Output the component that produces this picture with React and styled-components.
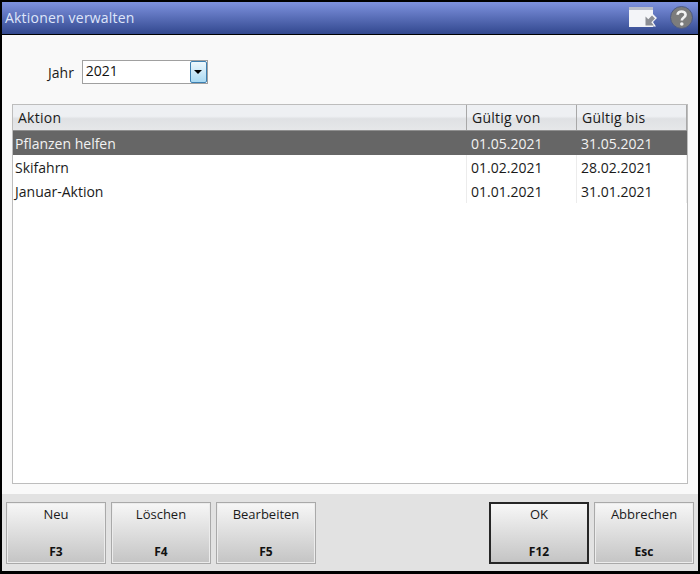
import styled, { createGlobalStyle } from "styled-components";

const GlobalStyle = createGlobalStyle`
html, body {
    margin: 0;
    padding: 0;
    background: #000;
}
body {
    font-family: "Open Sans", "Noto Sans", sans-serif;
}
`;

const Dialog = styled.div`
width: 700px;
height: 574px;
box-sizing: border-box;
border: 2px solid #000;
border-bottom-width: 3px;
display: flex;
flex-direction: column;
background: #f9f9f9;
overflow: hidden;
`;

const TitleBar = styled.header`
height: 33px;
flex: none;
box-sizing: border-box;
border-bottom: 1px solid #000;
padding: 0 5px 2px 3px;
display: flex;
align-items: center;
justify-content: space-between;
background: linear-gradient(#7e92df, #32488f);
`;

const Title = styled.h1`
margin: 0;
font-size: 14px;
font-weight: 400;
letter-spacing: 0.2px;
color: #dfe6fa;
`;

const TitleIcons = styled.div`
display: flex;
align-items: center;
gap: 13px;
`;

const Content = styled.main`
flex: 1;
min-height: 0;
display: flex;
flex-direction: column;
padding: 25px 10px 10px;
`;

const YearRow = styled.div`
display: flex;
align-items: center;
gap: 8px;
padding-left: 36px;
margin-bottom: 20px;
`;

const Label = styled.label`
font-size: 14px;
color: #1a1a1a;
`;

const Combo = styled.div`
width: 126px;
height: 24px;
box-sizing: border-box;
border: 1px solid #a0a0a0;
background: #fff;
display: flex;
align-items: center;
justify-content: space-between;
padding-left: 3px;
font-size: 14px;
line-height: 18px;
color: #111;
`;

const ComboValue = styled.span`
margin-bottom: 2px;
`;

const ComboButton = styled.span`
width: 17px;
height: 22px;
box-sizing: border-box;
border: 1px solid #3c7fb1;
border-radius: 2px;
background: linear-gradient(#eef8fd, #a9d9f3);
display: flex;
align-items: center;
justify-content: center;

&::after {
    content: "";
    border-left: 4px solid transparent;
    border-right: 4px solid transparent;
    border-top: 4px solid #000;
}
`;

const Table = styled.div`
flex: 1;
min-height: 0;
box-sizing: border-box;
border: 1px solid #bdbdbd;
background: #fff;
`;

const Columns = styled.div`
display: grid;
grid-template-columns: 454px 110px 110px;
height: ${(p) => p.$height}px;
box-sizing: border-box;
`;

const HeaderRow = styled(Columns)`
border-bottom: 1px solid #8f8f8f;
background: linear-gradient(#eef0f3 0, #eef0f3 45%, #dfe1e4 55%, #e6e7e9 100%);
`;

const HeaderCell = styled.div`
display: flex;
align-items: center;
padding-left: 5px;
font-size: 14px;
letter-spacing: 0.25px;
color: #1a1a1a;
border-right: 1px solid #a8a8a8;
`;

const Row = styled(Columns)`
background: ${(p) => (p.$selected ? "#666" : "#fff")};
color: ${(p) => (p.$selected ? "#f2f2f2" : "#1a1a1a")};
`;

const Cell = styled.div`
display: flex;
align-items: center;
padding-left: ${(p) => (p.$first ? 2 : 4)}px;
font-size: 14px;
border-right: 1px solid ${(p) => (p.$selected ? "#666" : "#ececec")};
`;

const Footer = styled.footer`
height: 77px;
flex: none;
box-sizing: border-box;
padding: 8px 4px 7px;
display: flex;
justify-content: space-between;
background: #e2e2e2;
`;

const ButtonGroup = styled.div`
display: flex;
gap: 5px;
`;

const Button = styled.button`
width: 100px;
height: 62px;
box-sizing: border-box;
padding: ${(p) => (p.$primary ? "1px 0 1px" : "2px 0 2px")};
display: flex;
flex-direction: column;
align-items: center;
justify-content: space-between;
border: ${(p) => (p.$primary ? "2px solid #262626" : "1px solid #a9a9a9")};
background: linear-gradient(#f7f7f7, #c4c4c4);
box-shadow: ${(p) => (p.$primary ? "none" : "inset 0 0 0 1px #ececec")};
font-family: inherit;
color: #1a1a1a;
`;

const ButtonLabel = styled.span`
font-size: 13px;
line-height: 18px;
`;

const ButtonKey = styled.span`
font-size: 12px;
font-weight: 700;
line-height: 18px;
color: #111;
`;

const rows = [
    { name: "Pflanzen helfen", from: "01.05.2021", to: "31.05.2021", selected: true },
    { name: "Skifahrn", from: "01.02.2021", to: "28.02.2021" },
    { name: "Januar-Aktion", from: "01.01.2021", to: "31.01.2021" },
];

function WindowIcon() {
    return (
        <svg width="28" height="20" viewBox="0 0 28 20">
            <rect x="0" y="0" width="24" height="20" fill="#f3f4f8" />
            <rect x="0" y="0" width="24" height="3" fill="#b9bdcb" />
            <path d="M15 19.5 L15 7 L19 10 L23 6 L28 11 L24 15 L27 19.5 Z" fill="#f3f4f8" />
            <path d="M16.5 18.5 L16.5 9.5 L19.3 12.3 L23 8.5 L26 11.5 L22.3 15.2 L25 18.5 Z" fill="#8b8d94" />
        </svg>
    );
}

function HelpIcon() {
    return (
        <svg width="23" height="23" viewBox="0 0 23 23">
            <circle cx="11.5" cy="11.5" r="11" fill="#7c7c7c" stroke="#4d5a85" />
            <path d="M7.6 8.8 C7.6 4.4 15.6 4.4 15.6 8.8 C15.6 11.6 11.8 11.4 11.8 14.4" fill="none" stroke="#f2f2f2" strokeWidth="2.6" />
            <circle cx="11.8" cy="18" r="1.8" fill="#f2f2f2" />
        </svg>
    );
}

export default function App() {
    return (
        <Dialog>
            <GlobalStyle />
            <TitleBar>
                <Title>Aktionen verwalten</Title>
                <TitleIcons>
                    <WindowIcon />
                    <HelpIcon />
                </TitleIcons>
            </TitleBar>
            <Content>
                <YearRow>
                    <Label>Jahr</Label>
                    <Combo>
                        <ComboValue>2021</ComboValue>
                        <ComboButton />
                    </Combo>
                </YearRow>
                <Table>
                    <HeaderRow $height={26}>
                        <HeaderCell>Aktion</HeaderCell>
                        <HeaderCell>Gültig von</HeaderCell>
                        <HeaderCell>Gültig bis</HeaderCell>
                    </HeaderRow>
                    {rows.map((row) => (
                        <Row key={row.name} $height={24} $selected={row.selected}>
                            <Cell $first $selected={row.selected}>{row.name}</Cell>
                            <Cell $selected={row.selected}>{row.from}</Cell>
                            <Cell $selected={row.selected}>{row.to}</Cell>
                        </Row>
                    ))}
                </Table>
            </Content>
            <Footer>
                <ButtonGroup>
                    <Button><ButtonLabel>Neu</ButtonLabel><ButtonKey>F3</ButtonKey></Button>
                    <Button><ButtonLabel>Löschen</ButtonLabel><ButtonKey>F4</ButtonKey></Button>
                    <Button><ButtonLabel>Bearbeiten</ButtonLabel><ButtonKey>F5</ButtonKey></Button>
                </ButtonGroup>
                <ButtonGroup>
                    <Button $primary><ButtonLabel>OK</ButtonLabel><ButtonKey>F12</ButtonKey></Button>
                    <Button><ButtonLabel>Abbrechen</ButtonLabel><ButtonKey>Esc</ButtonKey></Button>
                </ButtonGroup>
            </Footer>
        </Dialog>
    );
}
